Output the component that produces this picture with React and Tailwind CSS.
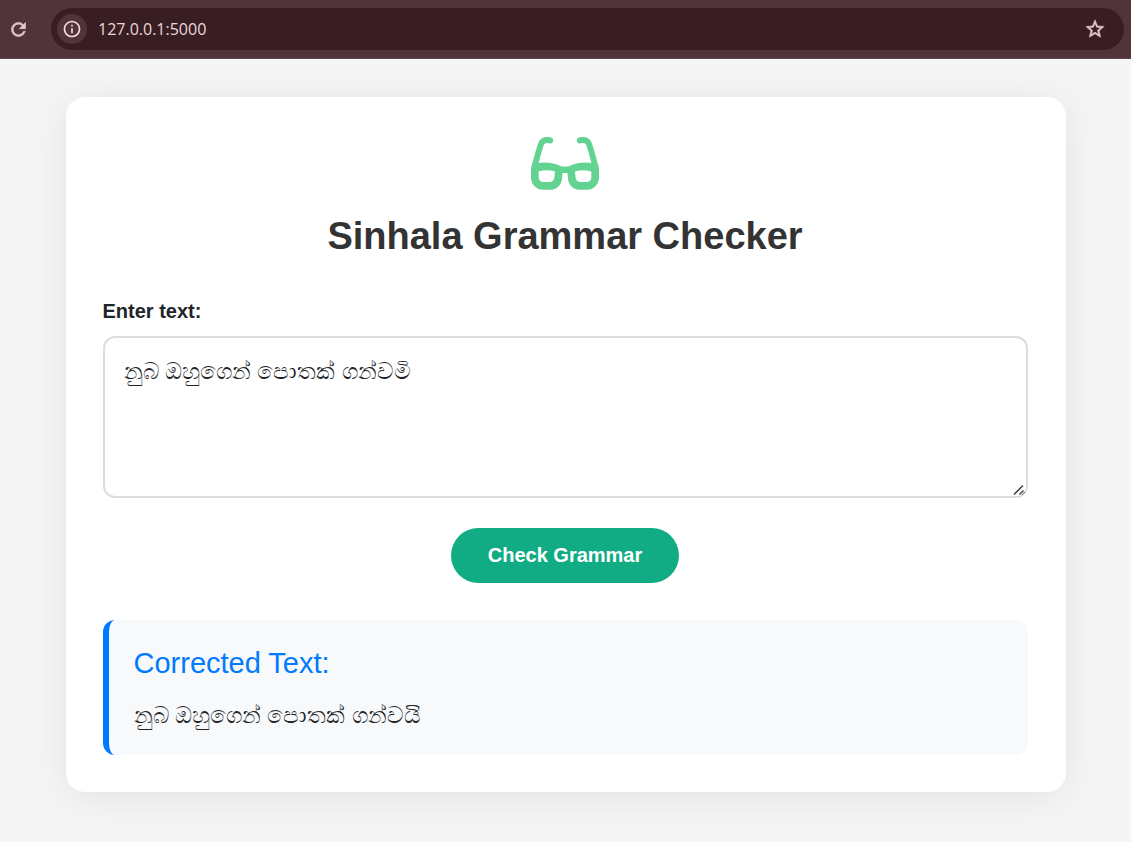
import { useState } from "react";
import { MdInfoOutline, MdStarOutline } from "react-icons/md";

function ReloadIcon() {
  return (
    <svg
      aria-hidden="true"
      viewBox="0 0 24 24"
      className="size-[21px] fill-current stroke-current stroke-[0.7]"
    >
      <path d="M17.65 6.35C16.2 4.9 14.21 4 12 4c-4.42 0-7.99 3.58-7.99 8s3.57 8 7.99 8c3.73 0 6.84-2.55 7.73-6h-2.08c-.82 2.33-3.04 4-5.65 4-3.31 0-6-2.69-6-6s2.69-6 6-6c1.66 0 3.14.69 4.22 1.78L13 11h7V4l-2.35 2.35z" />
    </svg>
  );
}

function GlassesIcon() {
  return (
    <svg
      aria-hidden="true"
      viewBox="0 0 68 53"
      className="mx-auto block h-[53px] w-[68px] text-[#63d391]"
    >
      <g fill="none" stroke="currentColor" strokeWidth="6" strokeLinecap="round">
        <path d="M19.2 3.4Q14 1.8 10.9 5.3Q9.3 7.4 3.5 30" />
        <path d="M48.8 3.4Q54 1.8 57.1 5.3Q58.7 7.4 64.5 30" />
      </g>
      <path
        fill="currentColor"
        fillRule="evenodd"
        d="M1.2 27.3Q17 23 30 29.3Q34 30 38 29.3Q51 23 66.8 27.3L68 32V40.8A12 12 0 0 1 56 52.8H49A12 12 0 0 1 37 41.8L36.5 36H31.5L31 41.8A12 12 0 0 1 19 52.8H12A12 12 0 0 1 0 40.8V32ZM7.7 34.5V40.5A4.5 4.5 0 0 0 12.2 45H18.4A5 5 0 0 0 23.4 40.6L24.1 34.5Q16 32 7.7 34.5ZM60.3 34.5V40.5A4.5 4.5 0 0 1 55.8 45H49.6A5 5 0 0 1 44.6 40.6L43.9 34.5Q52 32 60.3 34.5Z"
      />
    </svg>
  );
}

function BrowserBar() {
  return (
    <header className="flex h-[59px] items-center border-b border-[#5d4a4d] bg-[#513439] pr-[7px] pl-2">
      <button type="button" aria-label="Reload" className="mr-[22px] shrink-0 text-[#e3c5ca]">
        <ReloadIcon />
      </button>
      <div className="flex h-[42px] min-w-0 flex-1 items-center rounded-full bg-[#381e22] pr-[18px] pl-[6px]">
        <button
          type="button"
          aria-label="Site information"
          className="flex size-[30px] shrink-0 items-center justify-center rounded-full bg-[#513439] text-[#f2dde0]"
        >
          <MdInfoOutline className="size-5" />
        </button>
        <input
          type="text"
          aria-label="Address"
          defaultValue="127.0.0.1:5000"
          className="ml-[11px] min-w-0 flex-1 bg-transparent font-['Open_Sans','Noto_Sans',sans-serif] text-base text-[#ead7da] outline-none"
        />
        <button type="button" aria-label="Bookmark this page" className="shrink-0 text-[#e3c5ca]">
          <MdStarOutline className="size-[22px] stroke-current stroke-[0.6]" />
        </button>
      </div>
    </header>
  );
}

function ResizeGrip() {
  return (
    <svg
      aria-hidden="true"
      viewBox="0 0 14 12"
      className="pointer-events-none absolute right-[2px] bottom-[2px] h-3 w-[14px]"
    >
      <path d="M0 0H14V2C14 8 10 12 4 12H0Z" fill="#ffffff" />
      <path d="M2 10.5 11 1.5M7.5 10.5 11.5 6.5" stroke="#4a4a4a" strokeWidth="1.6" />
    </svg>
  );
}

export default function App() {
  const [text, setText] = useState("නුබ ඔහුගෙන් පොතක් ගන්වමි");

  return (
    <div className="flex min-h-screen flex-col bg-[#f5f5f5] font-['Liberation_Sans',Arial,sans-serif] text-[#212529]">
      <BrowserBar />
      <main className="flex-1 px-4 pt-[38px] pb-[50px]">
        <section className="mx-auto max-w-[1000px] rounded-[19px] bg-white pt-10 pr-[38px] pb-[37px] pl-[37px] shadow-[0_5px_38px_rgba(0,0,0,0.08)]">
          <GlassesIcon />
          <h1 className="mt-6 text-center text-[38px] leading-[44px] font-bold text-[#333333]">
            Sinhala Grammar Checker
          </h1>
          <form onSubmit={(event) => event.preventDefault()} className="mt-[38px]">
            <label htmlFor="text" className="block text-xl leading-[30px] font-bold">
              Enter text:
            </label>
            <div className="relative mt-[10px]">
              <textarea
                id="text"
                value={text}
                onChange={(event) => setText(event.target.value)}
                className="block h-[162px] w-full resize-y rounded-xl border-2 border-[#dddddd] bg-white px-[19px] py-[18px] text-[23px] leading-[30px] outline-none"
              />
              <ResizeGrip />
            </div>
            <button
              type="submit"
              className="mx-auto mt-[30px] block h-[55px] rounded-full bg-[#12ac84] px-[37px] pb-[2px] text-xl font-bold text-white"
            >
              Check Grammar
            </button>
          </form>
          <div className="mt-[37px] rounded-xl border-l-[6px] border-[#007bff] bg-[#f8f9fa] p-[25px]">
            <h2 className="text-[29px] leading-[37px] text-[#007bff]">Corrected Text:</h2>
            <p className="mt-[18px] text-[23px] leading-[30px]">නුබ ඔහුගෙන් පොතක් ගන්වයි</p>
          </div>
        </section>
      </main>
    </div>
  );
}
